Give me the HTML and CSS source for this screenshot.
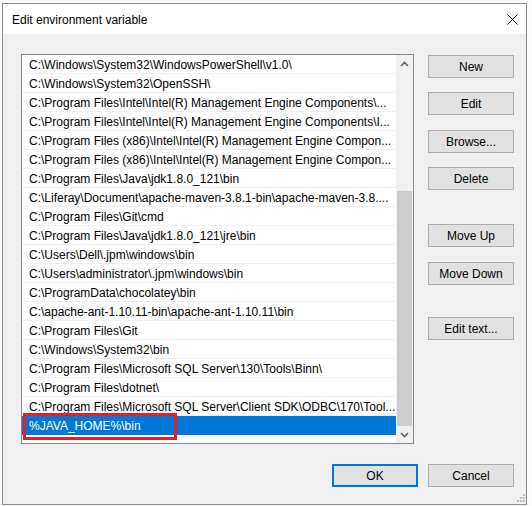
FILE: index.html
```html
<!DOCTYPE html>
<html>
<head>
<meta charset="utf-8">
<link rel="stylesheet" href="styles.css">
</head>
<body>
<div class="screen">
  <div class="window">
    <div class="titlebar">
      <span class="title">Edit environment variable</span>
      <svg class="close" width="11" height="11" viewBox="0 0 11 11"><path d="M0.5 0.5L10.5 10.5M10.5 0.5L0.5 10.5" stroke="#000" stroke-width="1" fill="none"/></svg>
    </div>
    <div class="content">
      <div class="main">
        <div class="listbox">
          <div class="rows">
            <div class="row">C:\Windows\System32\WindowsPowerShell\v1.0\</div>
            <div class="row">C:\Windows\System32\OpenSSH\</div>
            <div class="row">C:\Program Files\Intel\Intel(R) Management Engine Components\...</div>
            <div class="row">C:\Program Files\Intel\Intel(R) Management Engine Components\I...</div>
            <div class="row">C:\Program Files (x86)\Intel\Intel(R) Management Engine Compon...</div>
            <div class="row">C:\Program Files (x86)\Intel\Intel(R) Management Engine Compon...</div>
            <div class="row">C:\Program Files\Java\jdk1.8.0_121\bin</div>
            <div class="row">C:\Liferay\Document\apache-maven-3.8.1-bin\apache-maven-3.8....</div>
            <div class="row">C:\Program Files\Git\cmd</div>
            <div class="row">C:\Program Files\Java\jdk1.8.0_121\jre\bin</div>
            <div class="row">C:\Users\Dell\.jpm\windows\bin</div>
            <div class="row">C:\Users\administrator\.jpm\windows\bin</div>
            <div class="row">C:\ProgramData\chocolatey\bin</div>
            <div class="row">C:\apache-ant-1.10.11-bin\apache-ant-1.10.11\bin</div>
            <div class="row">C:\Program Files\Git</div>
            <div class="row">C:\Windows\System32\bin</div>
            <div class="row">C:\Program Files\Microsoft SQL Server\130\Tools\Binn\</div>
            <div class="row">C:\Program Files\dotnet\</div>
            <div class="row">C:\Program Files\Microsoft SQL Server\Client SDK\ODBC\170\Tool...</div>
            <div class="row selected">%JAVA_HOME%\bin</div>
          </div>
          <div class="scrollbar">
            <div class="arrow"><svg width="9" height="6" viewBox="0 0 9 6"><path d="M1 5L4.5 1.5L8 5" stroke="#606060" stroke-width="1.6" fill="none"/></svg></div>
            <div class="track"><div class="thumb"></div></div>
            <div class="arrow"><svg width="9" height="6" viewBox="0 0 9 6"><path d="M1 1L4.5 4.5L8 1" stroke="#606060" stroke-width="1.6" fill="none"/></svg></div>
          </div>
          <div class="highlight"></div>
        </div>
        <div class="buttons">
          <div class="btn first">New</div>
          <div class="btn g14">Edit</div>
          <div class="btn g15">Browse...</div>
          <div class="btn g14">Delete</div>
          <div class="btn g34">Move Up</div>
          <div class="btn g15">Move Down</div>
          <div class="btn g32">Edit text...</div>
        </div>
      </div>
      <div class="footer">
        <div class="btn default">OK</div>
        <div class="btn">Cancel</div>
      </div>
      <svg class="grip" width="8" height="8" viewBox="0 0 8 8">
        <rect x="6" y="0" width="2" height="2" fill="#bdbdbd"/>
        <rect x="3" y="3" width="2" height="2" fill="#bdbdbd"/>
        <rect x="6" y="3" width="2" height="2" fill="#bdbdbd"/>
        <rect x="0" y="6" width="2" height="2" fill="#bdbdbd"/>
        <rect x="3" y="6" width="2" height="2" fill="#bdbdbd"/>
        <rect x="6" y="6" width="2" height="2" fill="#bdbdbd"/>
      </svg>
    </div>
  </div>
</div>
</body>
</html>
```
FILE: styles.css
```css
html, body {
  margin: 0;
  padding: 0;
  background: #fbfbfb;
}
body {
  font-family: "Liberation Sans", Arial, sans-serif;
  font-size: 12px;
  color: #000;
}
.screen {
  padding: 3px 0 0 2px;
  width: 532px;
  height: 506px;
  box-sizing: border-box;
  overflow: hidden;
}
.window {
  width: 525px;
  height: 502px;
  box-sizing: border-box;
  border: 1px solid #8a8a8a;
  background: #f0f0f0;
  display: flex;
  flex-direction: column;
}
.titlebar {
  height: 30px;
  background: #fff;
  display: flex;
  align-items: center;
  justify-content: space-between;
  padding: 0 8px 0 9px;
  flex-shrink: 0;
}
.title {
  font-size: 12px;
  padding-top: 1px;
}
.close {
  display: block;
}
.content {
  flex: 1;
  padding: 20px 12px 0 18px;
  position: relative;
}
.main {
  display: flex;
  align-items: flex-start;
}
.listbox {
  width: 393px;
  height: 390px;
  box-sizing: border-box;
  border: 1px solid #828790;
  background: #fff;
  display: flex;
  position: relative;
}
.rows {
  flex: 1;
  min-width: 0;
}
.row {
  height: 19px;
  line-height: 19px;
  box-sizing: border-box;
  border-bottom: 1px solid #f0f0f0;
  padding-left: 7px;
  padding-top: 1px;
  white-space: nowrap;
  overflow: hidden;
}
.row.selected {
  background: #0078d7;
  color: #fff;
  border-bottom-color: #0078d7;
}
.scrollbar {
  width: 17px;
  background: #f0f0f0;
  display: flex;
  flex-direction: column;
}
.arrow {
  height: 17px;
  display: flex;
  align-items: center;
  justify-content: center;
}
.arrow svg {
  display: block;
}
.track {
  flex: 1;
  display: flex;
  flex-direction: column;
  justify-content: flex-end;
}
.thumb {
  height: 235px;
  margin: 0 1px;
  background: #cdcdcd;
}
.highlight {
  position: absolute;
  left: 1px;
  top: 358px;
  width: 154px;
  height: 27px;
  box-sizing: border-box;
  border: 3px solid #e0202a;
  pointer-events: none;
}
.buttons {
  margin-left: 14px;
  display: flex;
  flex-direction: column;
}
.btn {
  width: 86px;
  height: 23px;
  box-sizing: border-box;
  border: 1px solid #adadad;
  background: #e1e1e1;
  display: flex;
  align-items: center;
  justify-content: center;
  font-size: 12px;
}
.first { margin-top: 1px; }
.g14 { margin-top: 14px; }
.g15 { margin-top: 15px; }
.g32 { margin-top: 32px; }
.g34 { margin-top: 34px; }
.footer {
  margin-top: 20px;
  display: flex;
  justify-content: flex-end;
  gap: 10px;
}
.btn.default {
  border: 2px solid #0078d7;
}
.grip {
  position: absolute;
  right: 1px;
  bottom: 2px;
}
```
